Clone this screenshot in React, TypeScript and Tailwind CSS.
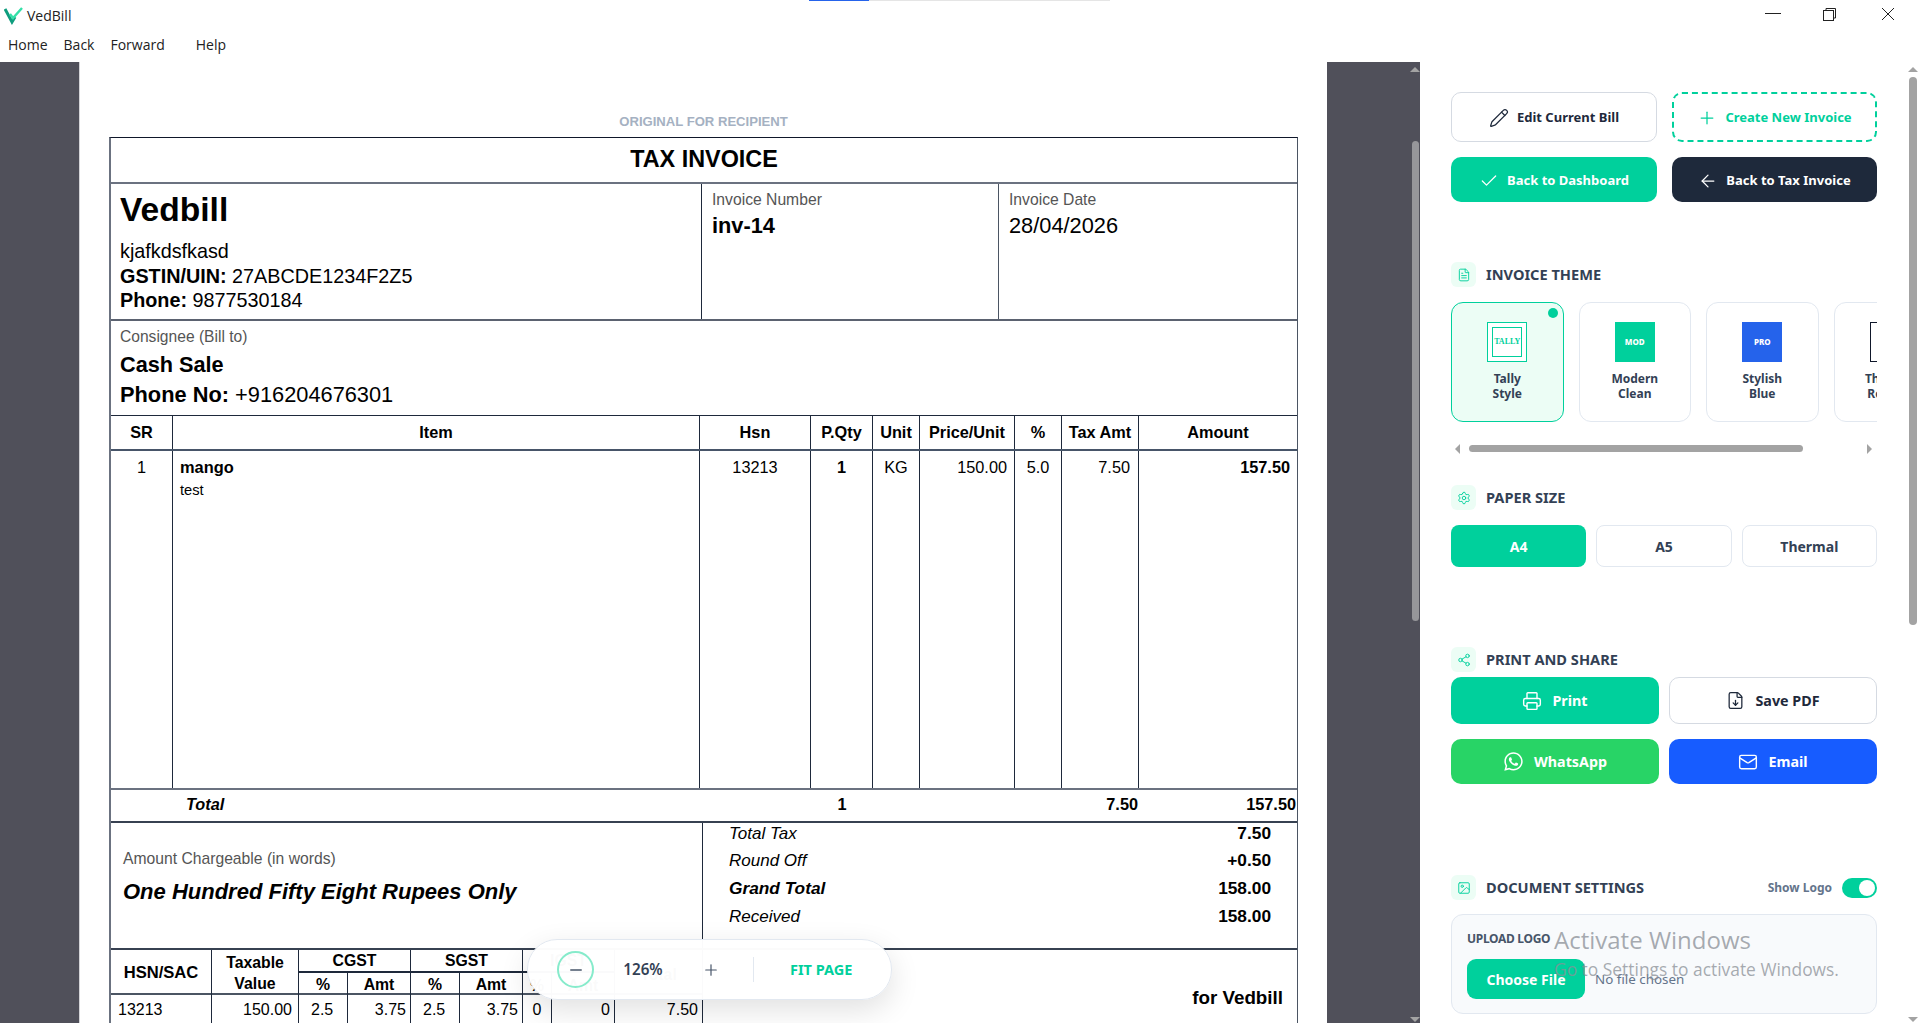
import { ArrowLeft, Check, FileDown, FileText, Image, Mail, Minus, Pencil, Plus, Printer, Settings, Share2 } from "lucide-react";
import { ReactNode } from "react";
import { FaWhatsapp } from "react-icons/fa";

const itemCols = "grid grid-cols-[62px_527px_111px_62px_47px_95px_47px_77px_1fr]";
const taxCols = "grid grid-cols-[101px_87px_49px_63px_49px_63px_29px_63px_1fr]";

const Arrow = ({ dir, className }: { dir: "up" | "down" | "left" | "right"; className?: string }) => {
  const points = { up: "0,5 5,0 10,5", down: "0,0 5,5 10,0", left: "5,0 5,10 0,5", right: "0,0 0,10 5,5" }[dir];
  const size = dir === "up" || dir === "down" ? { w: 10, h: 5 } : { w: 5, h: 10 };
  return (
    <svg width={size.w} height={size.h} viewBox={`0 0 ${size.w} ${size.h}`} className={className}>
      <polygon points={points} fill="#a3a3a3" />
    </svg>
  );
};

const TitleBar = () => (
  <div className="h-[30px] flex items-center justify-between relative">
    <div className="flex items-center pl-[4px]">
      <svg width="20" height="20" viewBox="0 0 20 20" fill="none">
        <path d="M1 4 L8 17 L11 12" stroke="#0f9d7e" strokeWidth="3" />
        <path d="M6 9 L9 13 L18 3" stroke="#34e0a8" strokeWidth="2.4" />
      </svg>
      <span className="ml-[3px] text-[14px] text-[#222] font-['Open_Sans',sans-serif]">VedBill</span>
    </div>
    <div className="absolute left-[809px] top-0 w-[301px] h-px bg-[#e5e5e5]">
      <div className="w-[60px] h-px bg-[#2563eb]" />
    </div>
    <div className="flex items-center">
      <svg width="155" height="30" viewBox="0 0 155 30" fill="none" stroke="#222" strokeWidth="1">
        <path d="M0 13.5 H16" />
        <rect x="58.5" y="10.5" width="10" height="10" />
        <path d="M61 10 V8.5 H70.5 V18 H69" />
        <path d="M117 8 L129 20 M129 8 L117 20" />
      </svg>
    </div>
  </div>
);

const MenuBar = () => (
  <div className="h-[32px] pb-[4px] flex items-center text-[14px] text-[#222] font-['Open_Sans',sans-serif]">
    <span className="ml-[8px]">Home</span>
    <span className="ml-[16px]">Back</span>
    <span className="ml-[16px]">Forward</span>
    <span className="ml-[31px]">Help</span>
  </div>
);

const ItemRow = ({ cells, className }: { cells: ReactNode[]; className: string }) => (
  <div className={`${itemCols} ${className}`}>
    {cells.map((c, i) => (
      <div key={i} className={i < 8 ? "border-r border-r-[#1e293b] min-w-0" : "min-w-0"}>
        {c}
      </div>
    ))}
  </div>
);

const Center = ({ children, className = "" }: { children?: ReactNode; className?: string }) => (
  <div className={`h-full flex items-center justify-center ${className}`}>{children}</div>
);

const Right = ({ children, className = "" }: { children?: ReactNode; className?: string }) => (
  <div className={`h-full flex items-center justify-end ${className}`}>{children}</div>
);

const Invoice = () => (
  <div className="w-[1248px] bg-white border-l border-l-[#d4d4d8] pl-[29px] font-['Liberation_Sans',Arial,sans-serif] text-black overflow-hidden">
    <div className="w-[1189px] pt-[50px] h-[75px] flex justify-center">
      <span className="text-[13.1px] leading-[20px] font-bold text-[#a5b1c2]">ORIGINAL FOR RECIPIENT</span>
    </div>
    <div className="w-[1189px] border-t border-t-[#0f172a] border-l-2 border-l-[#6b7280] border-r border-r-[#4b5563]">
      <div className="h-[46px] flex items-center justify-center border-b-2 border-b-[#6b7280] text-[23.4px] font-bold">TAX INVOICE</div>

      <div className="h-[137px] grid grid-cols-[591px_297px_1fr] border-b-2 border-b-[#5b6270]">
        <div className="border-r border-r-[#1e293b] pl-[9px] pt-[6px]">
          <div className="text-[33.6px] leading-[40px] font-bold">Vedbill</div>
          <div className="mt-[9px] text-[19.8px] leading-[24.6px]">kjafkdsfkasd</div>
          <div className="text-[19.8px] leading-[24.6px]"><b>GSTIN/UIN:</b> 27ABCDE1234F2Z5</div>
          <div className="text-[19.8px] leading-[24.6px]"><b>Phone:</b> 9877530184</div>
        </div>
        <div className="border-r border-r-[#4b5563] pl-[10px] pt-[6px]">
          <div className="text-[15.7px] leading-[20px] text-[#555]">Invoice Number</div>
          <div className="mt-[2px] text-[21.8px] leading-[28px] font-bold">inv-14</div>
        </div>
        <div className="pl-[10px] pt-[6px]">
          <div className="text-[15.7px] leading-[20px] text-[#555]">Invoice Date</div>
          <div className="mt-[2px] text-[21.8px] leading-[28px]">28/04/2026</div>
        </div>
      </div>

      <div className="h-[95px] pl-[9px] pt-[6px] border-b border-b-[#1e293b]">
        <div className="text-[15.6px] leading-[20px] text-[#555]">Consignee (Bill to)</div>
        <div className="mt-[4px] text-[21.7px] leading-[28px] font-bold">Cash Sale</div>
        <div className="mt-[2px] text-[21.8px] leading-[28px]"><b>Phone No:</b> +916204676301</div>
      </div>

      <ItemRow
        className="h-[35px] border-b-2 border-b-[#475569] text-[16.3px] font-bold"
        cells={["SR", "Item", "Hsn", "P.Qty", "Unit", "Price/Unit", "%", "Tax Amt", "Amount"].map((h) => (
          <Center key={h}>{h}</Center>
        ))}
      />
      <ItemRow
        className="h-[339px] border-b-2 border-b-[#6b7280] text-[16.3px] leading-[22px]"
        cells={[
          <div className="pt-[5px] text-center">1</div>,
          <div className="pt-[5px] pl-[7px]">
            <div className="font-bold text-[16.4px]">mango</div>
            <div className="pt-[1px] text-[14.7px]">test</div>
          </div>,
          <div className="pt-[5px] text-center">13213</div>,
          <div className="pt-[5px] text-center font-bold">1</div>,
          <div className="pt-[5px] text-center">KG</div>,
          <div className="pt-[5px] pr-[7px] text-right">150.00</div>,
          <div className="pt-[5px] text-center">5.0</div>,
          <div className="pt-[5px] pr-[8px] text-right">7.50</div>,
          <div className="pt-[5px] pr-[7px] text-right font-bold">157.50</div>,
        ]}
      />

      <div className={`${itemCols} h-[33px] border-b-2 border-b-[#374151] text-[16.3px] font-bold`}>
        <div className="col-span-2 pl-[75px] pb-[2px] flex items-center italic">Total</div>
        <div />
        <Center className="pb-[2px]">1</Center>
        <div />
        <div />
        <div />
        <Right className="pr-[1px] pb-[2px]">7.50</Right>
        <Right className="pr-[1px] pb-[2px]">157.50</Right>
      </div>

      <div className="h-[127px] flex border-b-2 border-b-[#374151]">
        <div className="w-[592px] border-r border-r-[#1e293b] pl-[12px] pt-[26px]">
          <div className="text-[15.7px] leading-[20px] text-[#555]">Amount Chargeable (in words)</div>
          <div className="mt-[9px] text-[22px] leading-[28px] font-bold italic">One Hundred Fifty Eight Rupees Only</div>
        </div>
        <div className="flex-1 pl-[26px] pr-[26px]">
          <div className="h-[22px] flex items-center justify-between text-[17px]"><i>Total Tax</i><b className="text-[17.3px]">7.50</b></div>
          <div className="mt-[5px] h-[22px] flex items-center justify-between text-[17px]"><i>Round Off</i><b className="text-[17.3px]">+0.50</b></div>
          <div className="mt-[6px] h-[22px] flex items-center justify-between text-[17.3px] font-bold"><i>Grand Total</i><span>158.00</span></div>
          <div className="mt-[6px] h-[22px] flex items-center justify-between text-[17px]"><i>Received</i><b className="text-[17.3px]">158.00</b></div>
        </div>
      </div>

      <div className="h-[75px] flex border-b border-b-[#4b5563]">
        <div className="w-[592px] border-r border-r-[#1e293b]">
          <div className={`${taxCols} h-[45px] border-b-2 border-b-[#4b5563] text-[15.8px] font-bold text-center`}>
            <Center className="border-r border-r-[#1e293b] pb-[2px] text-[16.6px]">HSN/SAC</Center>
            <Center className="border-r border-r-[#1e293b] pb-[2px] leading-[21px]">Taxable<br />Value</Center>
            <div className="col-span-2 border-r border-r-[#1e293b] flex flex-col">
              <div className="h-[23px] flex items-center justify-center border-b-2 border-b-[#1e293b]">CGST</div>
              <div className="flex-1 grid grid-cols-[49px_1fr]">
                <Center className="border-r border-r-[#1e293b] pb-[2px]">%</Center>
                <Center className="pb-[2px]">Amt</Center>
              </div>
            </div>
            <div className="col-span-2 border-r border-r-[#1e293b] flex flex-col">
              <div className="h-[23px] flex items-center justify-center border-b-2 border-b-[#1e293b]">SGST</div>
              <div className="flex-1 grid grid-cols-[49px_1fr]">
                <Center className="border-r border-r-[#1e293b] pb-[2px]">%</Center>
                <Center className="pb-[2px]">Amt</Center>
              </div>
            </div>
            <div className="col-span-2 border-r border-r-[#1e293b] flex flex-col">
              <div className="h-[23px] flex items-center justify-center border-b-2 border-b-[#1e293b]">IGST</div>
              <div className="flex-1 grid grid-cols-[29px_1fr]">
                <Center className="border-r border-r-[#1e293b]">%</Center>
                <Center>Amt</Center>
              </div>
            </div>
            <Center>Total</Center>
          </div>
          <div className={`${taxCols} h-[29px] text-[16px]`}>
            <div className="border-r border-r-[#1e293b] pl-[7px] flex items-center">13213</div>
            <Right className="border-r border-r-[#1e293b] pr-[6px]">150.00</Right>
            <div className="border-r border-r-[#1e293b] pl-[12px] flex items-center">2.5</div>
            <Right className="border-r border-r-[#1e293b] pr-[4px]">3.75</Right>
            <div className="border-r border-r-[#1e293b] pl-[12px] flex items-center">2.5</div>
            <Right className="border-r border-r-[#1e293b] pr-[4px]">3.75</Right>
            <Center className="border-r border-r-[#1e293b]">0</Center>
            <Right className="border-r border-r-[#1e293b] pr-[4px]">0</Right>
            <Right className="pr-[4px]">7.50</Right>
          </div>
        </div>
        <div className="flex-1 pr-[14px] pt-[36px] text-right">
          <span className="text-[18.8px] leading-[24px] font-bold">for Vedbill</span>
        </div>
      </div>
    </div>
  </div>
);

const SectionHead = ({ icon, title, className = "" }: { icon: ReactNode; title: string; className?: string }) => (
  <div className={`flex items-center ${className}`}>
    <div className="w-[25px] h-full flex items-center justify-center rounded-[6px] bg-[#ecfdf5] text-[#00d09c]">{icon}</div>
    <span className="ml-[10px] pt-[1px] text-[14.6px] font-bold text-[#334155]">{title}</span>
  </div>
);

const ThemeCard = ({ thumb, top, bottom, active }: { thumb: ReactNode; top: string; bottom: string; active?: boolean }) => (
  <div
    className={`relative shrink-0 w-[112.5px] h-[120px] rounded-[12px] border flex flex-col items-center pt-[19px] ${
      active ? "border-[#00d09c] bg-[#ecfdf5]" : "border-[#e2e8f0] bg-white"
    }`}
  >
    {active && <div className="absolute right-[5px] top-[5px] w-[10px] h-[10px] rounded-full bg-[#00d09c]" />}
    {thumb}
    <div className="mt-[9px] text-[12px] leading-[15px] font-bold text-[#334155] text-center">
      {top}
      <br />
      {bottom}
    </div>
  </div>
);

const SidePanel = () => (
  <div className="flex-1 flex bg-white font-['Noto_Sans',sans-serif]">
    <div className="w-[489px] pl-[31px] pr-[32px] pt-[30px] overflow-hidden">
      <div className="grid grid-cols-[206px_205px] gap-x-[15px] gap-y-[15px]">
        <button className="h-[50px] pt-[2px] rounded-[10px] border border-[#d5dae2] bg-white flex items-center justify-center text-[13px] font-bold text-[#1e293b]">
          <Pencil size={20} strokeWidth={1.5} className="mr-[8px]" />
          Edit Current Bill
        </button>
        <button className="h-[50px] pt-[2px] rounded-[10px] border-2 border-dashed border-[#00d09c] bg-white flex items-center justify-center text-[13px] font-bold text-[#00d09c]">
          <Plus size={20} strokeWidth={1.5} className="mr-[8px]" />
          Create New Invoice
        </button>
        <button className="h-[45px] pt-[2px] rounded-[10px] bg-[#00d09c] flex items-center justify-center text-[13px] font-bold text-white">
          <Check size={20} strokeWidth={1.5} className="mr-[8px]" />
          Back to Dashboard
        </button>
        <button className="h-[45px] pt-[2px] rounded-[10px] bg-[#1e293b] flex items-center justify-center text-[13px] font-bold text-white">
          <ArrowLeft size={20} strokeWidth={1.5} className="mr-[8px]" />
          Back to Tax Invoice
        </button>
      </div>

      <SectionHead className="mt-[60px] h-[25px]" icon={<FileText size={14} strokeWidth={1.6} />} title="INVOICE THEME" />
      <div className="mt-[15px] flex gap-[15px] overflow-hidden">
        <ThemeCard
          active
          top="Tally"
          bottom="Style"
          thumb={
            <div className="w-[40px] h-[40px] border border-[#00d09c] bg-white p-[4px]">
              <div className="w-full h-full border border-[#00d09c] flex items-center justify-center font-['Liberation_Serif',serif] text-[8px] font-bold text-[#00d09c]">TALLY</div>
            </div>
          }
        />
        <ThemeCard
          top="Modern"
          bottom="Clean"
          thumb={<div className="w-[40px] h-[40px] bg-[#00d09c] flex items-center justify-center text-[8px] font-extrabold text-white">MOD</div>}
        />
        <ThemeCard
          top="Stylish"
          bottom="Blue"
          thumb={<div className="w-[40px] h-[40px] bg-[#2563eb] flex items-center justify-center text-[8px] font-extrabold text-white">PRO</div>}
        />
        <ThemeCard
          top="Thermal"
          bottom="Receipt"
          thumb={<div className="w-[40px] h-[40px] border border-[#0f172a] bg-white" />}
        />
      </div>
      <div className="mt-[23px] h-[7px] flex items-center">
        <Arrow dir="left" className="ml-[4px]" />
        <div className="ml-[9px] w-[334px] h-[7px] rounded-full bg-[#a3a3a3]" />
        <Arrow dir="right" className="ml-[64px]" />
      </div>

      <SectionHead className="mt-[33px] h-[25px]" icon={<Settings size={14} strokeWidth={1.6} />} title="PAPER SIZE" />
      <div className="mt-[15px] grid grid-cols-3 gap-[10px] text-[14px] font-bold text-[#334155]">
        <div className="h-[42px] rounded-[8px] bg-[#00d09c] flex items-center justify-center text-white">A4</div>
        <div className="h-[42px] rounded-[8px] border border-[#e2e8f0] flex items-center justify-center">A5</div>
        <div className="h-[42px] rounded-[8px] border border-[#e2e8f0] flex items-center justify-center">Thermal</div>
      </div>

      <SectionHead className="mt-[80px] h-[25px]" icon={<Share2 size={14} strokeWidth={1.6} />} title="PRINT AND SHARE" />
      <div className="mt-[5px] grid grid-cols-2 gap-x-[10px] gap-y-[15px] text-[14.3px] font-bold">
        <div className="h-[47px] rounded-[10px] bg-[#00d09c] text-white flex items-center justify-center">
          <Printer size={20} strokeWidth={1.7} className="mr-[10px]" />
          Print
        </div>
        <div className="h-[47px] rounded-[10px] border border-[#d5dae2] text-[#1e293b] flex items-center justify-center">
          <FileDown size={19} strokeWidth={1.6} className="mr-[10px]" />
          Save PDF
        </div>
        <div className="h-[45px] rounded-[10px] bg-[#28d466] text-white flex items-center justify-center">
          <FaWhatsapp size={21} className="mr-[10px]" />
          WhatsApp
        </div>
        <div className="h-[45px] rounded-[10px] bg-[#175cff] text-white flex items-center justify-center">
          <Mail size={20} strokeWidth={1.7} className="mr-[10px]" />
          Email
        </div>
      </div>

      <div className="mt-[91px] h-[25px] flex items-center justify-between">
        <SectionHead className="h-full" icon={<Image size={14} strokeWidth={1.6} />} title="DOCUMENT SETTINGS" />
        <div className="flex items-center">
          <span className="text-[12px] font-bold text-[#64748b]">Show Logo</span>
          <div className="ml-[10px] w-[35px] h-[20px] rounded-full bg-[#00d09c] flex items-center justify-end pr-[2px]">
            <div className="w-[16px] h-[16px] rounded-full bg-white" />
          </div>
        </div>
      </div>
      <div className="mt-[14px] h-[100px] rounded-[12px] border border-[#e2e8f0] bg-[#f8fafc] pl-[15px] pt-[15px]">
        <div className="text-[12px] leading-[18px] font-bold tracking-[-0.3px] text-[#475569]">UPLOAD LOGO</div>
        <div className="mt-[11px] flex items-center">
          <div className="w-[118px] h-[40px] rounded-[9px] bg-[#00d09c] flex items-center justify-center text-[14px] font-bold text-white">Choose File</div>
          <span className="ml-[10px] text-[13.4px] text-[#64748b]">No file chosen</span>
        </div>
      </div>
    </div>
    <div className="w-[11px] flex flex-col items-start">
      <Arrow dir="up" className="mt-[5px] -ml-px" />
      <div className="mt-[5px] w-[8px] h-[548px] rounded-full bg-[#a3a3a3]" />
      <div className="flex-1" />
      <Arrow dir="down" className="mb-[1px] -ml-px" />
    </div>
  </div>
);

export default function App() {
  return (
    <div className="relative w-[1920px] h-[1023px] overflow-hidden bg-white">
      <TitleBar />
      <MenuBar />
      <div className="h-[961px] flex overflow-hidden">
        <div className="w-[79px] bg-[#50505a]" />
        <Invoice />
        <div className="w-[83px] bg-[#50505a]" />
        <div className="w-[10px] bg-[#50505a] flex flex-col items-center">
          <Arrow dir="up" className="mt-[5px]" />
          <div className="mt-[69px] w-[7px] h-[480px] rounded-full bg-[#96969a]" />
          <div className="flex-1" />
          <Arrow dir="down" className="mb-[1px]" />
        </div>
        <SidePanel />
      </div>

      <div className="absolute left-[527px] top-[939px] w-[365px] h-[61px] rounded-[30px] border border-[#e2e8f0] bg-white/[0.98] shadow-[0_10px_30px_rgba(0,0,0,0.12)] flex items-center pl-[29px] font-['Noto_Sans',sans-serif]">
        <div className="w-[37px] h-[37px] rounded-full border-2 border-[#86ebcb] flex items-center justify-center text-[#475569]">
          <Minus size={18} strokeWidth={1.8} />
        </div>
        <span className="ml-[27px] w-[44px] text-center text-[15.2px] font-semibold text-[#334155]">126%</span>
        <Plus size={18} strokeWidth={1.6} className="ml-[37px] text-[#475569]" />
        <div className="ml-[33px] w-px h-[25px] bg-[#e2e8f0]" />
        <span className="ml-[36px] text-[14.5px] font-bold text-[#00d09c]">FIT PAGE</span>
      </div>

      <div className="absolute left-[1554px] top-[923px] pointer-events-none font-['Open_Sans',sans-serif] text-[#8a8f96]/75">
        <div className="text-[24px] leading-[34px]">Activate Windows</div>
        <div className="mt-[1px] text-[17.4px] leading-[22px]">Go to Settings to activate Windows.</div>
      </div>
    </div>
  );
}
